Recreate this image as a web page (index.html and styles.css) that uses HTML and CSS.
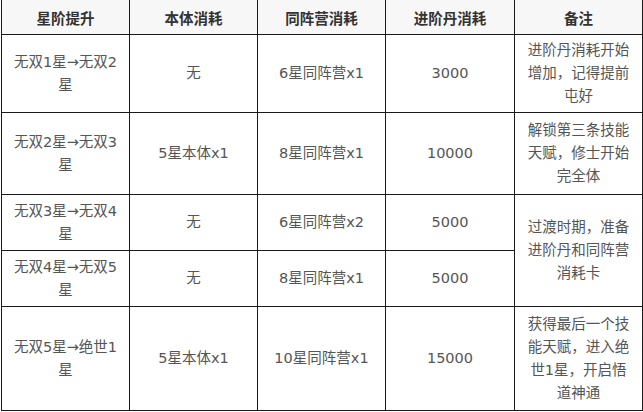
FILE: index.html
```html
<!DOCTYPE html>
<html lang="zh">
<head>
<meta charset="utf-8">
<link rel="stylesheet" href="styles.css">
</head>
<body>
<table class="grid">
  <colgroup>
    <col class="c1"><col class="c2"><col class="c3"><col class="c4"><col class="c5">
  </colgroup>
  <thead>
    <tr class="head">
      <th>星阶提升</th><th>本体消耗</th><th>同阵营消耗</th><th>进阶丹消耗</th><th>备注</th>
    </tr>
  </thead>
  <tbody>
    <tr class="r1">
      <td>无双1星→无双2星</td><td>无</td><td>6星同阵营x1</td><td>3000</td><td>进阶丹消耗开始增加，记得提前屯好</td>
    </tr>
    <tr class="r2">
      <td>无双2星→无双3星</td><td>5星本体x1</td><td>8星同阵营x1</td><td>10000</td><td>解锁第三条技能天赋，修士开始完全体</td>
    </tr>
    <tr class="r3">
      <td>无双3星→无双4星</td><td>无</td><td>6星同阵营x2</td><td>5000</td><td rowspan="2">过渡时期，准备进阶丹和同阵营消耗卡</td>
    </tr>
    <tr class="r4">
      <td>无双4星→无双5星</td><td>无</td><td>8星同阵营x1</td><td>5000</td>
    </tr>
    <tr class="r5">
      <td>无双5星→绝世1星</td><td>5星本体x1</td><td>10星同阵营x1</td><td>15000</td><td>获得最后一个技能天赋，进入绝世1星，开启悟道神通</td>
    </tr>
  </tbody>
</table>
</body>
</html>
```
FILE: styles.css
```css
html, body {
  margin: 0;
  padding: 0;
  background: #fff;
}
body {
  font-family: "DejaVu Sans", "Noto Sans CJK SC", sans-serif;
  font-size: 14.5px;
  color: #555;
  overflow: hidden;
}
.grid {
  border-collapse: collapse;
  table-layout: fixed;
  width: 641px;
  margin: -1px 0 0 1px;
}
.c1, .c2, .c3 { width: 128px; }
.c4 { width: 129px; }
.c5 { width: 128px; }
.grid th, .grid td {
  border: 1px solid #1a1a1a;
  text-align: center;
  vertical-align: middle;
  padding: 0 10px;
  line-height: 23px;
  word-break: break-all;
}
.grid th {
  font-family: "Noto Sans CJK SC", sans-serif;
  font-size: 14.5px;
  font-weight: bold;
  color: #333;
  background: #f7f7f7;
}
.head { height: 35px; }
.r1 { height: 78px; }
.r2 { height: 82px; }
.r3 { height: 56px; }
.r4 { height: 56px; }
.r5 { height: 104px; }
```
